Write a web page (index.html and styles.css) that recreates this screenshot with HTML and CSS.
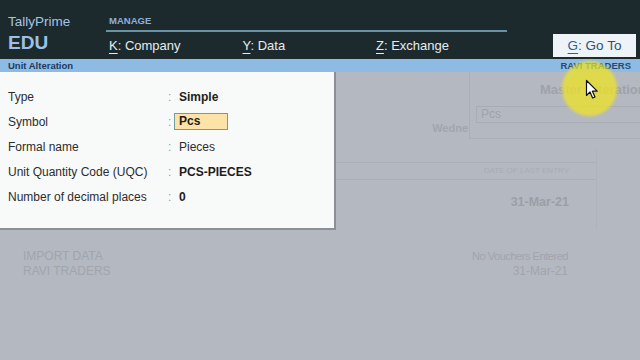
FILE: index.html
```html
<!DOCTYPE html>
<html>
<head>
<meta charset="utf-8">
<title>TallyPrime - Unit Alteration</title>
<link rel="stylesheet" href="styles.css">
</head>
<body>
<div class="screen">
  <header class="topbar">
    <div class="brand">
      <div class="brand-name">TallyPrime</div>
      <div class="brand-edu">EDU</div>
    </div>
    <div class="nav">
      <div class="nav-title">MANAGE</div>
      <div class="nav-row">
        <div class="nav-item"><span class="key">K</span>: Company</div>
        <div class="nav-item"><span class="key">Y</span>: Data</div>
        <div class="nav-item"><span class="key">Z</span>: Exchange</div>
        <div class="goto"><span class="key">G</span>: Go To</div>
      </div>
    </div>
  </header>

  <div class="titlebar">
    <span>Unit Alteration</span>
    <span>RAVI TRADERS</span>
  </div>

  <main class="main">
    <div class="bg">
      <div class="bg-top">
        <div class="wedne">Wedne</div>
        <div class="card">
          <div class="card-title">Master Alteration</div>
          <div class="card-input">Pcs</div>
        </div>
      </div>
      <div class="bg-table">
        <div class="thead">DATE OF LAST ENTRY</div>
        <div class="tdate">31-Mar-21</div>
      </div>
      <div class="bg-list">
        <div class="list-row"><span>IMPORT DATA</span><span class="narrow">No Vouchers Entered</span></div>
        <div class="list-row"><span>RAVI TRADERS</span><span>31-Mar-21</span></div>
      </div>
    </div>

    <section class="panel">
      <div class="row"><span class="lbl">Type</span><span class="colon">:</span><span class="val bold">Simple</span></div>
      <div class="row"><span class="lbl">Symbol</span><span class="colon">:</span><span class="val"><span class="input bold">Pcs</span></span></div>
      <div class="row"><span class="lbl">Formal name</span><span class="colon">:</span><span class="val">Pieces</span></div>
      <div class="row"><span class="lbl">Unit Quantity Code (UQC)</span><span class="colon">:</span><span class="val bold">PCS-PIECES</span></div>
      <div class="row"><span class="lbl">Number of decimal places</span><span class="colon">:</span><span class="val bold">0</span></div>
    </section>
  </main>

  <div class="spot"></div>
  <svg class="cursor" width="14" height="21" viewBox="0 0 14 21">
    <path d="M1.5 1.5 L1.5 16.5 L5 13 L7.6 19 L10 18 L7.4 12.2 L12.2 12.2 Z" fill="#ffffff" stroke="#111111" stroke-width="1.2" stroke-linejoin="round"/>
  </svg>
</div>
</body>
</html>
```

FILE: styles.css
```css
* { box-sizing: border-box; }

html, body {
  margin: 0;
  padding: 0;
}

body {
  width: 640px;
  height: 360px;
  overflow: hidden;
  font-family: "Liberation Sans", Arial, sans-serif;
  background: #b4b8c0;
}

.screen {
  position: relative;
  width: 640px;
  height: 360px;
  display: flex;
  flex-direction: column;
}

/* ---------- top bar ---------- */
.topbar {
  height: 59px;
  background: #1c2a2e;
  display: flex;
}

.brand {
  width: 106px;
  padding: 13px 0 0 8px;
  display: flex;
  flex-direction: column;
}

.brand-name {
  font-size: 13.5px;
  line-height: 17px;
  color: #a6c4e2;
}

.brand-edu {
  font-size: 19px;
  line-height: 25px;
  font-weight: bold;
  color: #9dc1e6;
}

.nav {
  flex: 1;
  display: flex;
  flex-direction: column;
  padding-right: 4px;
}

.nav-title {
  width: 401px;
  padding: 15px 0 3px 3px;
  font-size: 9.5px;
  line-height: 12px;
  font-weight: bold;
  color: #8db2da;
  border-bottom: 2px solid #6893a4;
}

.nav-row {
  height: 27px;
  display: flex;
  align-items: center;
  padding-left: 3px;
}

.nav-item {
  width: 133.5px;
  font-size: 13px;
  color: #e6ecee;
}

.key {
  text-decoration: underline;
  text-underline-offset: 3px;
}

.goto {
  margin-left: auto;
  width: 83px;
  height: 23px;
  background: #eef3f7;
  color: #2e4f72;
  font-size: 13.5px;
  display: flex;
  align-items: center;
  justify-content: center;
}

.goto .key {
  color: #2f5f9a;
}

/* ---------- title bar ---------- */
.titlebar {
  height: 13px;
  background: #8dbbe3;
  display: flex;
  justify-content: space-between;
  align-items: center;
  padding: 0 9px 0 8px;
  font-size: 9.5px;
  font-weight: bold;
  color: #1f3a5c;
}

.titlebar span:last-child {
  color: #2a4a70;
}

/* ---------- main area ---------- */
.main {
  position: relative;
  flex: 1;
  background: #b4b8c0;
  overflow: hidden;
}

.bg {
  display: flex;
  flex-direction: column;
}

.bg-top {
  height: 67px;
  display: flex;
  justify-content: flex-end;
  align-items: flex-end;
}

.wedne {
  white-space: nowrap;
  margin-bottom: 5px;
  padding-right: 1px;
  font-size: 11px;
  font-weight: bold;
  color: #a2a6ad;
}

.card {
  width: 171px;
  height: 67px;
  border-left: 1px solid #abafb6;
  border-bottom: 1px solid #abafb6;
  display: flex;
  flex-direction: column;
  overflow: hidden;
}

.card-title {
  padding: 10px 0 0 70px;
  line-height: 16px;
  font-size: 13px;
  font-weight: bold;
  white-space: nowrap;
  color: #9ea2aa;
}

.card-input {
  margin: 8px 0 0 6px;
  height: 17px;
  border: 1px solid #a8acb3;
  border-right: none;
  padding-left: 4px;
  font-size: 12px;
  line-height: 15px;
  color: #9fa3ab;
}

.bg-table {
  width: 597px;
  margin-top: 11px;
  padding-top: 12px;
  padding-bottom: 6px;
  border-right: 1px solid #afb3ba;
}

.thead {
  height: 18px;
  border-top: 1px solid #abafb6;
  border-bottom: 1px solid #abafb6;
  text-align: right;
  padding-right: 27px;
  font-size: 8px;
  line-height: 16px;
  color: #a9adb4;
}

.tdate {
  height: 44px;
  line-height: 44px;
  text-align: right;
  padding-right: 27px;
  font-size: 12.5px;
  font-weight: bold;
  color: #9b9fa7;
}

.bg-list {
  width: 568px;
  margin-top: 19px;
  padding-left: 23px;
  display: flex;
  flex-direction: column;
}

.list-row {
  display: flex;
  justify-content: space-between;
  line-height: 15px;
  font-size: 12px;
  color: #a1a5ad;
}

.narrow {
  font-size: 11px;
  letter-spacing: -0.45px;
}

/* ---------- alteration panel ---------- */
.panel {
  position: absolute;
  left: 0;
  top: 0;
  width: 336px;
  height: 158px;
  background: #f8faf9;
  border-right: 2px solid #8c9096;
  border-bottom: 2px solid #8c9096;
  padding-top: 12px;
  display: flex;
  flex-direction: column;
}

.row {
  height: 25px;
  display: flex;
  align-items: center;
  font-size: 12px;
  color: #2c2c2c;
}

.lbl {
  width: 168px;
  padding-left: 8px;
}

.colon {
  width: 6px;
  color: #9a9a9a;
  text-align: left;
}

.val {
  padding-left: 5px;
}

.row:nth-child(2) .val {
  padding-left: 0;
}

.bold {
  font-weight: bold;
  color: #1e1e1e;
}

.input {
  display: inline-block;
  width: 54px;
  height: 17px;
  line-height: 15px;
  padding-left: 4px;
  background: #fde3a7;
  border: 1px solid #6f9ea0;
}

/* ---------- cursor highlight overlay ---------- */
.spot {
  position: absolute;
  left: 562px;
  top: 61px;
  width: 55px;
  height: 55px;
  border-radius: 50%;
  background: rgba(242, 230, 30, 0.72);
  filter: blur(1.5px);
}

.cursor {
  position: absolute;
  left: 585px;
  top: 79px;
}
```
